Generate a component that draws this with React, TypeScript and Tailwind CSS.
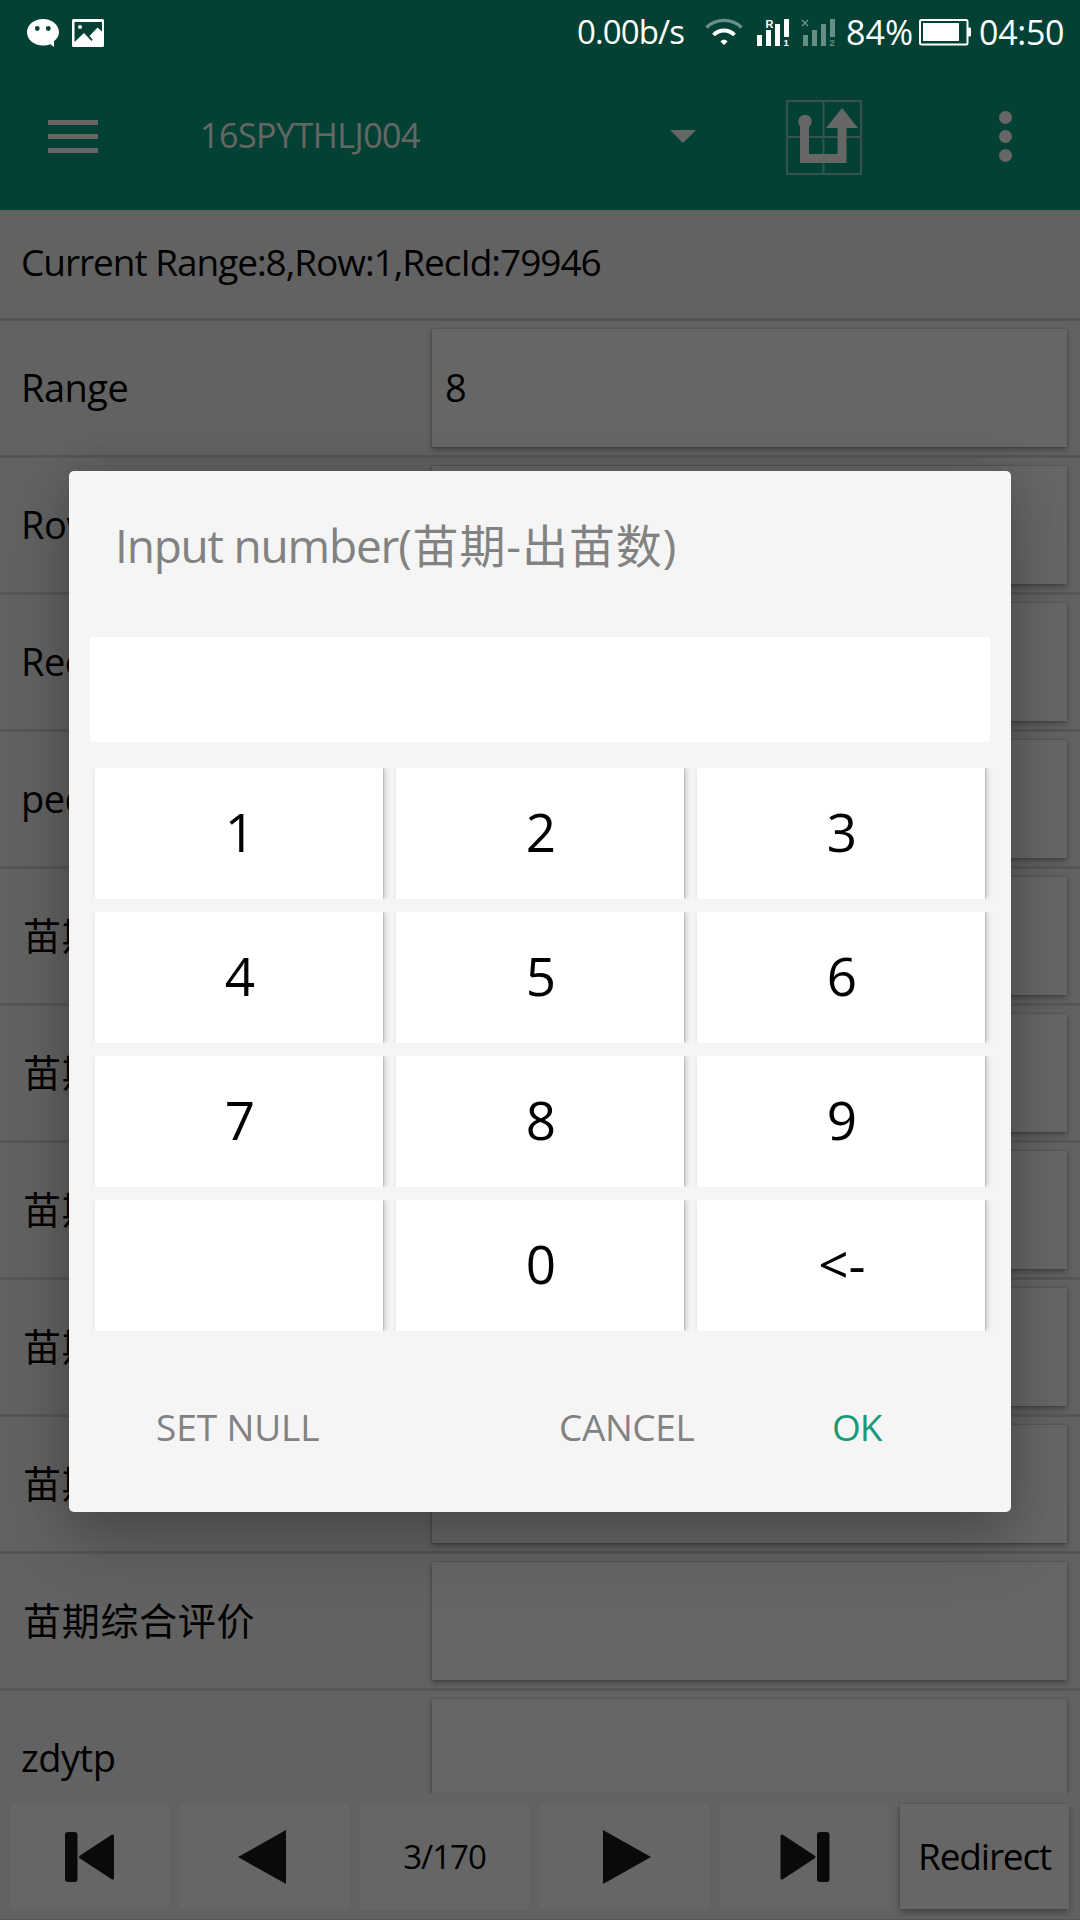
const fields = [
  { label: "Range", value: "8" },
  { label: "Row", value: "" },
  { label: "RecId", value: "" },
  { label: "pedigree", value: "" },
  { label: "苗期-出苗数", value: "" },
  { label: "苗期-出苗率", value: "" },
  { label: "苗期-整齐度", value: "" },
  { label: "苗期-长势", value: "" },
  { label: "苗期-叶色", value: "" },
  { label: "苗期综合评价", value: "" },
  { label: "zdytp", value: "" },
];

const keypad = [
  ["1", "2", "3"],
  ["4", "5", "6"],
  ["7", "8", "9"],
  ["", "0", "<-"],
];

function StatusBar() {
  return (
    <div className="relative z-20 flex h-[62px] items-center pt-px pl-[27px] text-[34px] leading-none text-white">
      <svg className="mt-0.5 h-7 w-8 shrink-0" viewBox="0 0 32 28" fill="currentColor">
        <path
          fillRule="evenodd"
          d="M16 0C7.200 0 0 5.900 0 13.300s7.200 13.300 16 13.300c2.700 0 5.200-.5 7.400-1.400L27 28v-5.700c3-2.400 5-5.500 5-9C32 5.900 24.800 0 16 0zM10.300 7.100a2.400 2.400 0 1 1 0 4.800 2.400 2.400 0 0 1 0-4.800zm11 0a2.400 2.400 0 1 1 0 4.800 2.400 2.400 0 0 1 0-4.800z"
        />
      </svg>
      <svg className="mt-0.5 ml-[13px] h-7 w-8 shrink-0" viewBox="0 0 32 28" fill="currentColor">
        <path
          fillRule="evenodd"
          d="M1.500 0h29A1.500 1.500 0 0 1 32 1.500v25a1.500 1.500 0 0 1-1.500 1.500h-29A1.500 1.500 0 0 1 0 26.500v-25A1.500 1.500 0 0 1 1.500 0zM2.500 3v20l9.500-9 7.500 8 1.200-1.200-3.200-3.800 8-8.500 4.500 4V3z"
        />
        <circle cx="8" cy="8" r="2" />
      </svg>
      <span className="ml-[473px] w-[107px] shrink-0 text-[33px] tracking-[-0.9px]">0.00b/s</span>
      <svg className="ml-[21px] h-7 w-[38px] shrink-0" viewBox="0 0 38 28" fill="none" stroke="currentColor">
        <path d="M1.500 9.500C11 0 27 0 36.500 9.500" strokeWidth="3.400" opacity=".42" />
        <path d="M8.500 17C14.500 11 23.500 11 29.500 17" strokeWidth="3.800" />
        <path d="M15.500 23.500c1.500-2.500 5.500-2.500 7 0L19 27z" fill="currentColor" stroke="none" />
      </svg>
      <svg className="ml-[14px] h-7 w-[34px] shrink-0 overflow-visible" viewBox="0 0 34 28" fill="currentColor">
        <path d="M0 17h5v11H0zM9 12h5v16H9zM18 6h5v22h-5zM27 1h5v18h-5z" />
        <text x="8.500" y="9.500" fontSize="11" fontWeight="700" className="font-['Liberation_Sans',sans-serif]">R</text>
        <text x="26.500" y="28" fontSize="9.500" fontWeight="700" className="font-['Liberation_Sans',sans-serif]">1</text>
      </svg>
      <svg className="ml-[10px] h-7 w-[34px] shrink-0 overflow-visible" viewBox="0 0 34 28" fill="currentColor" opacity=".4">
        <path d="M2 17h5v11H2zM11 12h5v16h-5zM20 6h5v22h-5zM29 1h5v18h-5z" />
        <path d="M1 2l6 6M7 2l-6 6" stroke="currentColor" strokeWidth="1.500" />
        <text x="28.500" y="28" fontSize="9.500" fontWeight="700" className="font-['Liberation_Sans',sans-serif]">2</text>
      </svg>
      <span className="ml-[11px] w-[68px] shrink-0">84%</span>
      <svg className="ml-[5px] h-7 w-[52px] shrink-0" viewBox="0 0 52 28" fill="currentColor">
        <rect x="1" y="2" width="47.500" height="24.500" rx="1.500" fill="none" stroke="currentColor" strokeWidth="2" />
        <rect x="4" y="5" width="36" height="18" />
        <rect x="49" y="9.500" width="3" height="9" rx="1" />
      </svg>
      <span className="ml-[8px] shrink-0 tracking-[-0.3px]">04:50</span>
    </div>
  );
}

function Toolbar() {
  return (
    <div className="flex h-[148px] items-center pl-12 text-white">
      <div className="flex w-[50px] flex-col gap-[9px]">
        <i className="h-[5px] bg-current" />
        <i className="h-[5px] bg-current" />
        <i className="h-[5px] bg-current" />
      </div>
      <span className="ml-[102px] w-[470px] pb-[3px] text-[34px] leading-none tracking-[-0.5px]">16SPYTHLJ004</span>
      <svg className="h-[13px] w-[26px]" viewBox="0 0 26 13" fill="currentColor">
        <path d="M0 0h26L13 13z" />
      </svg>
      <svg className="mt-[3px] ml-[90px] h-[75px] w-[76px]" viewBox="0 0 76 75" fill="none" stroke="currentColor">
        <path d="M1 1h74v73H1zM37.500 1v73M1 37h74" strokeWidth="2" opacity=".5" />
        <circle cx="19" cy="21.500" r="6.800" fill="currentColor" stroke="none" />
        <path d="M18.500 21v37.500h37.500V26" strokeWidth="9" />
        <path d="M56 8L72 28H40z" fill="currentColor" stroke="none" />
      </svg>
      <div className="ml-[137px] flex flex-col gap-[6px]">
        <i className="size-[13px] rounded-full bg-current" />
        <i className="size-[13px] rounded-full bg-current" />
        <i className="size-[13px] rounded-full bg-current" />
      </div>
    </div>
  );
}

function FieldRow({ label, value }: { label: string; value: string }) {
  return (
    <div className="flex h-[137px] shrink-0 border-b-[3px] border-[#d6d6d6] py-2 text-[38px] leading-none">
      <div className="flex w-[432px] items-center pl-[21px] pb-[3px] whitespace-nowrap tracking-[-0.5px]">
        <span className={/[a-z]/i.test(label) ? "" : "ml-0.5 tracking-[0.7px]"}>{label}</span>
      </div>
      <div className="flex w-[635px] items-center bg-white pl-[13px] pb-[3px] shadow-[0_3px_6px_rgba(0,0,0,0.3),0_0_2px_rgba(0,0,0,0.25)]">
        {value}
      </div>
    </div>
  );
}

function BottomBar() {
  return (
    <div className="flex h-[127px] shrink-0 gap-[11px] border-b border-[#d6d6d6] pt-[11px] pl-[11px] text-[#191919]">
      <button className="flex h-[105px] w-[158px] items-center bg-white pl-[54px]">
        <svg className="h-[52px] w-[51px]" viewBox="0 0 51 52" fill="currentColor">
          <rect x="0" y="1" width="12.500" height="50" rx="3" />
          <path d="M15.500 26L47.500 5v42z" stroke="currentColor" strokeWidth="3" strokeLinejoin="round" />
        </svg>
      </button>
      <button className="flex h-[105px] w-[169px] items-center bg-white pl-[58px]">
        <svg className="h-[54px] w-[48px]" viewBox="0 0 48 54" fill="currentColor">
          <path d="M0 27L48 0v54z" />
        </svg>
      </button>
      <button className="mt-px flex h-[105px] w-[169px] items-center justify-center bg-white pb-[2px] text-[33px] leading-none tracking-[-1px] text-black">
        3/170
      </button>
      <button className="flex h-[105px] w-[169px] items-center bg-white pl-[63px]">
        <svg className="h-[54px] w-[48px]" viewBox="0 0 48 54" fill="currentColor">
          <path d="M48 27L0 0v54z" />
        </svg>
      </button>
      <button className="flex h-[105px] w-[169px] items-center bg-white pl-[59px]">
        <svg className="h-[52px] w-[51px]" viewBox="0 0 51 52" fill="currentColor">
          <rect x="38" y="1" width="12.500" height="50" rx="3" />
          <path d="M35 26L3 5v42z" stroke="currentColor" strokeWidth="3" strokeLinejoin="round" />
        </svg>
      </button>
      <button className="flex h-[105px] w-[169px] items-center justify-center bg-white pb-[3px] text-[37px] leading-none tracking-[-1.200px] text-black shadow-[0_4px_7px_rgba(0,0,0,0.3),0_0_2px_rgba(0,0,0,0.2)]">
        Redirect
      </button>
    </div>
  );
}

function NumberDialog() {
  return (
    <div className="h-[1041px] w-[942px] rounded-[5px] bg-[#f5f5f5] text-[#828282] shadow-[0_0_44px_rgba(0,0,0,0.15),0_34px_64px_rgba(0,0,0,0.2)]">
      <h2 className="h-[166px] pt-[44px] pl-[46px] text-[46px] leading-[60px] tracking-[-1.200px] whitespace-nowrap">
        Input number(<span className="ml-0.5 tracking-[0.9px]">苗期-出苗数)</span>
      </h2>
      <div className="mx-[21px] h-[105px] bg-white" />
      <div className="mt-[26px] flex flex-col gap-[13px]">
        {keypad.map((row, i) => (
          <div key={i} className="flex h-[131px] gap-[13px] overflow-hidden pl-[26px]">
            {row.map((key, j) => (
              <button
                key={j}
                className="flex w-[288px] items-center justify-center bg-white pb-1 pl-0.5 text-[53px] leading-none text-black shadow-[2px_0_6px_rgba(0,0,0,0.2),1px_0_1px_rgba(0,0,0,0.1)]"
              >
                {key}
              </button>
            ))}
          </div>
        ))}
      </div>
      <div className="mt-[76px] flex pl-[87px] text-[37px] leading-10">
        <button className="w-[403px] text-left tracking-[-0.1px]">SET NULL</button>
        <button className="w-[273px] text-left tracking-[-0.4px]">CANCEL</button>
        <button className="text-left tracking-[-1px] text-[#159b7b]">OK</button>
      </div>
    </div>
  );
}

export default function App() {
  return (
    <div className="relative flex h-[1920px] w-[1080px] flex-col overflow-hidden bg-[#f5f5f5] font-['Open_Sans','Noto_Sans_CJK_SC',sans-serif] text-black">
      <header className="h-[210px] shrink-0 bg-[#08a282]">
        <StatusBar />
        <Toolbar />
      </header>
      <div className="flex h-[111px] shrink-0 items-center border-b-[3px] border-[#d6d6d6] pl-[21px] pb-[5px] text-[37px] leading-none tracking-[-1.040px]">
        Current Range:8,Row:1,RecId:79946
      </div>
      <main className="flex h-[1472px] shrink-0 flex-col overflow-hidden">
        {fields.map((f) => (
          <FieldRow key={f.label} label={f.label} value={f.value} />
        ))}
      </main>
      <BottomBar />
      <div className="absolute inset-0 z-10 flex items-center justify-center bg-black/60 pt-[63px]">
        <NumberDialog />
      </div>
    </div>
  );
}
